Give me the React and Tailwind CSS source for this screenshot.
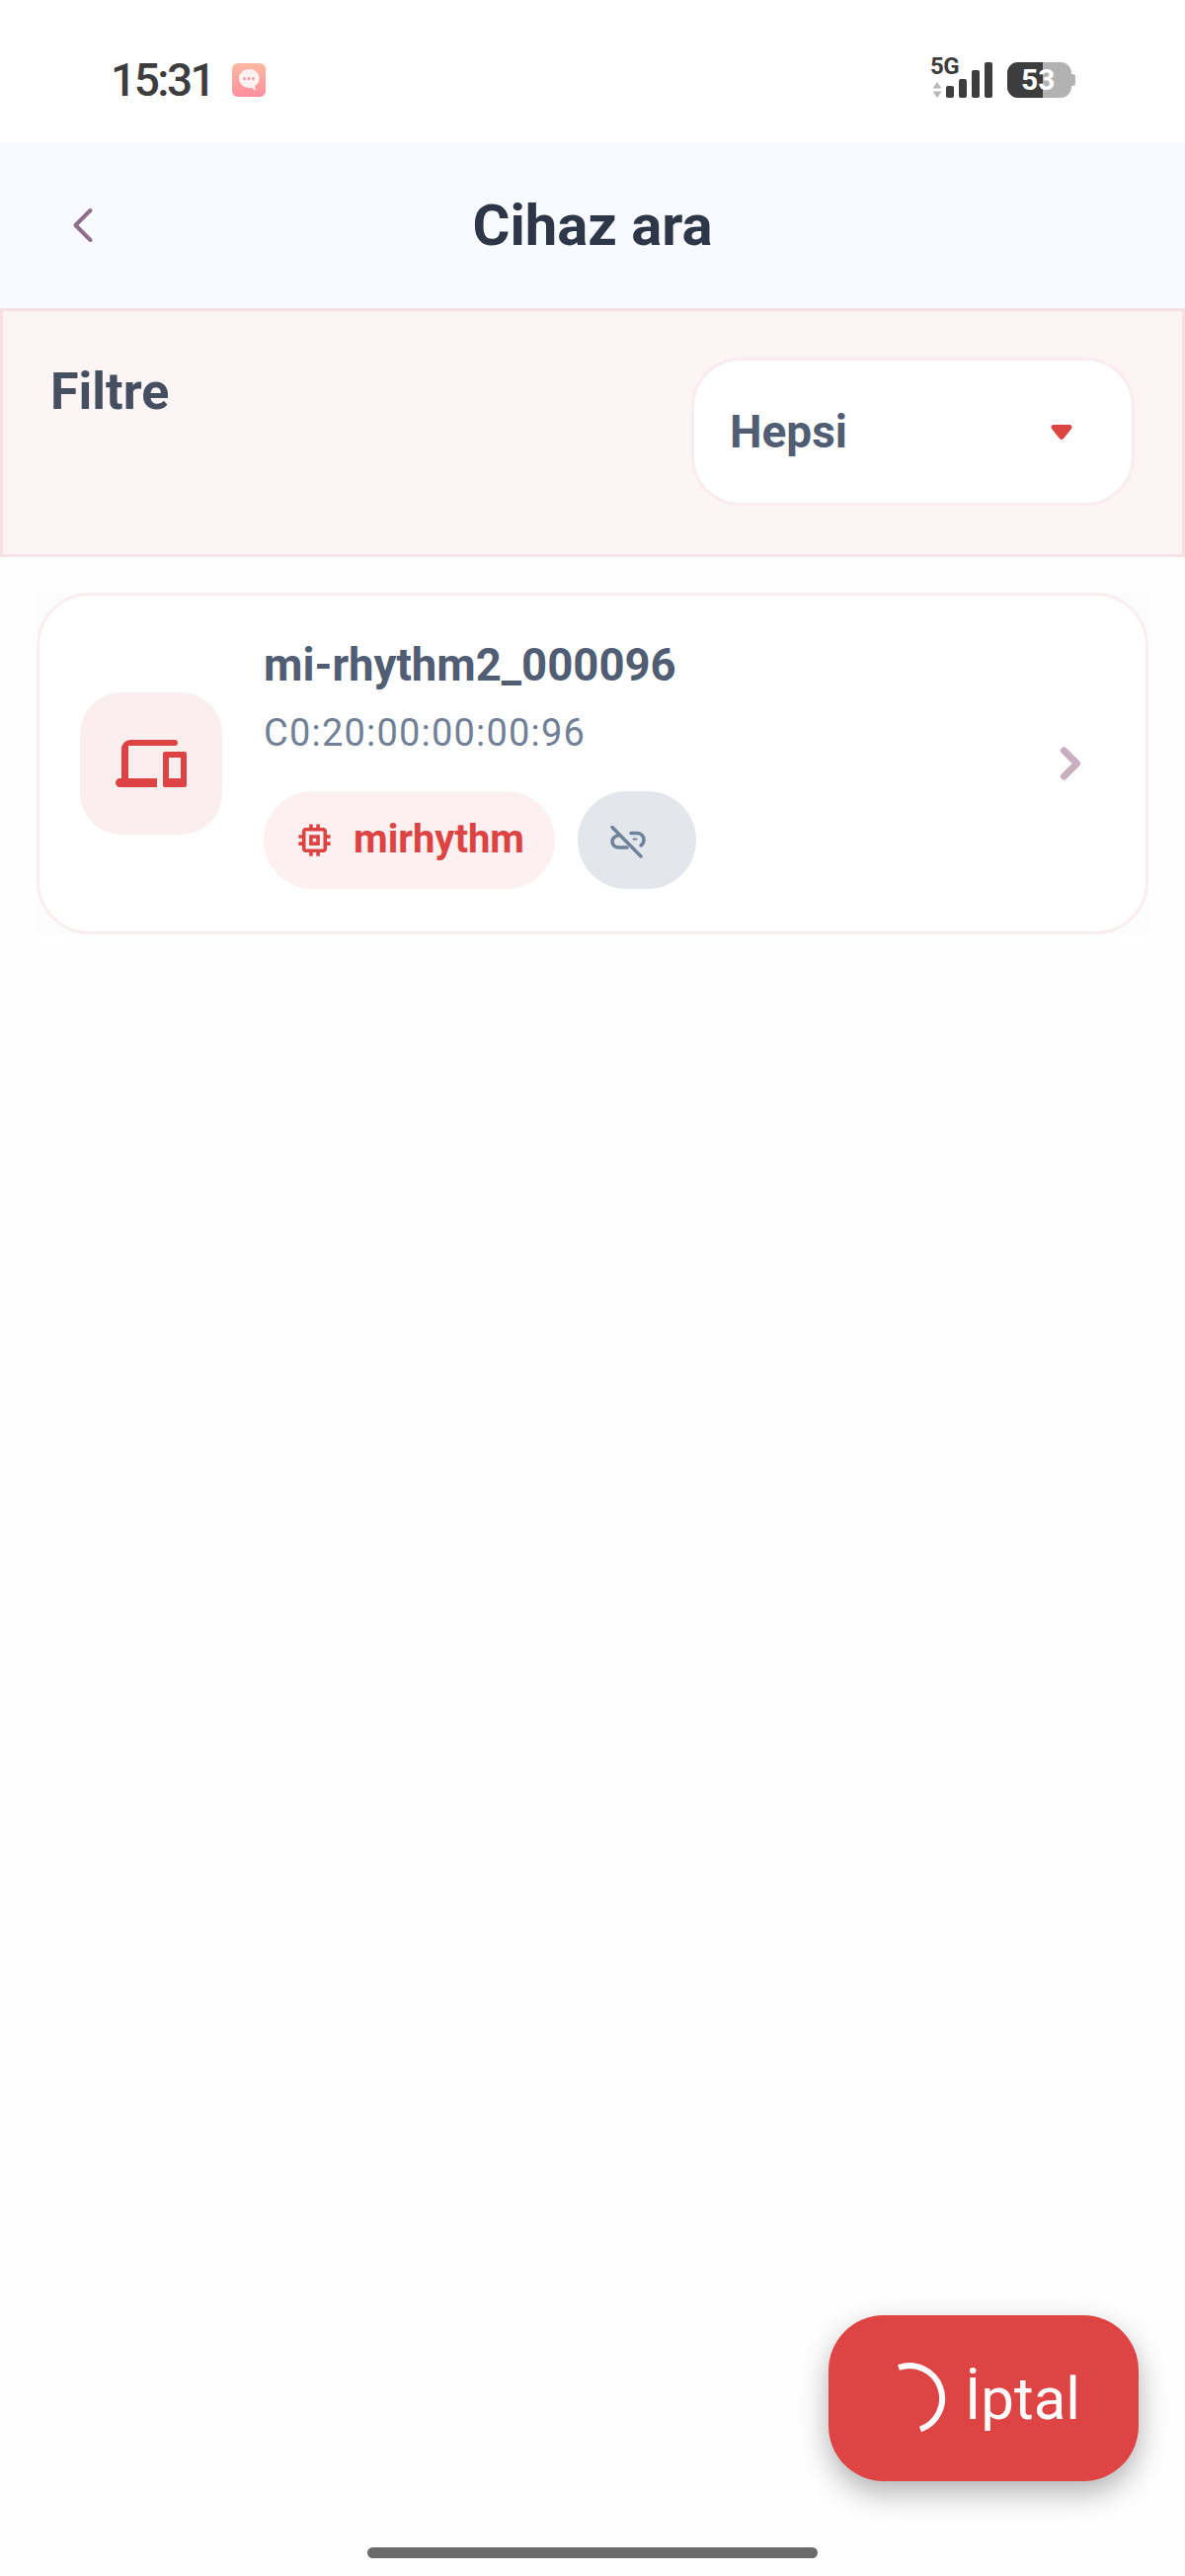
import { ChevronLeft, ChevronRight } from "lucide-react";

function MessageBadge() {
  return (
    <div className="w-[34px] h-[34px] rounded-[6px] bg-gradient-to-b from-[#ffb8a0] to-[#ff8f9f] flex items-center justify-center">
      <svg width="22" height="24" viewBox="0 0 22 24">
        <path d="M11 1a10 9.500 0 0 0 0 19h3l4 3-1-4.500A9.500 9.500 0 0 0 11 1z" fill="#fff" opacity="0.85" />
        <circle cx="6.500" cy="10.500" r="1.500" fill="#f29aa2" />
        <circle cx="11" cy="10.500" r="1.500" fill="#f29aa2" />
        <circle cx="15.500" cy="10.500" r="1.500" fill="#f29aa2" />
      </svg>
    </div>
  );
}

function SignalIcon() {
  return (
    <div className="flex items-end h-[40px]">
      <div className="flex flex-col items-start w-[28px] h-[40px] -mr-[12px]">
        <span className="text-[24px] leading-[16px] font-bold text-[#3d3d3d] tracking-[-0.5px]">5G</span>
        <svg width="10" height="16" viewBox="0 0 10 16" className="mt-[8px] ml-[2px]">
          <path d="M5 0l4.500 6.500H.5zM5 16l4.500-6.500H.5z" fill="#b8b8b8" />
        </svg>
      </div>
      <div className="flex items-end gap-[5px]">
        <div className="w-[8px] h-[12px] rounded-[2px] bg-[#3d3d3d]" />
        <div className="w-[8px] h-[19px] rounded-[2px] bg-[#3d3d3d]" />
        <div className="w-[8px] h-[28px] rounded-[2px] bg-[#3d3d3d]" />
        <div className="w-[8px] h-[36px] rounded-[2px] bg-[#3d3d3d]" />
      </div>
    </div>
  );
}

function BatteryIcon() {
  return (
    <div className="relative flex items-center">
      <div className="relative w-[65px] h-[36px] rounded-[11px] bg-[#b2b2b2] overflow-hidden">
        <div className="w-[36px] h-full bg-[#3d3d3d]" />
      </div>
      <div className="w-[4px] h-[12px] rounded-r-[3px] bg-[#b2b2b2]" />
      <span className="absolute left-[14px] top-[3px] text-[30px] leading-[30px] font-bold text-white">53</span>
    </div>
  );
}

function DevicesIcon() {
  return (
    <svg width="72" height="48" viewBox="0 0 72 48" fill="#dd4343">
      <path d="M15 0h45a3 3 0 0 1 0 6H13v33h29v9H4.500a4.500 4.500 0 0 1 0-9H6V9a9 9 0 0 1 9-9z" />
      <path fillRule="evenodd" d="M50 12h20a2 2 0 0 1 2 2v32a2 2 0 0 1-2 2H50a2 2 0 0 1-2-2V14a2 2 0 0 1 2-2zm4 6v21h12V18z" />
    </svg>
  );
}

function ChipIcon() {
  return (
    <svg width="43" height="43" viewBox="0 0 24 24" fill="#dd4343">
      <path d="M15 9H9v6h6V9zm-2 4h-2v-2h2v2zm8-2V9h-2V7c0-1.100-.9-2-2-2h-2V3h-2v2h-2V3H9v2H7c-1.100 0-2 .9-2 2v2H3v2h2v2H3v2h2v2c0 1.100.9 2 2 2h2v2h2v-2h2v2h2v-2h2c1.100 0 2-.9 2-2v-2h2v-2h-2v-2h2zm-4 6H7V7h10v10z" />
    </svg>
  );
}

function LinkOffIcon() {
  return (
    <svg width="60" height="52" viewBox="0 0 60 52" fill="none" stroke="#6f819b" strokeWidth="3.500" strokeLinecap="round">
      <path d="M15 12.500L44 42" />
      <path d="M22 20.500C17.500 21.500 15 24 15 27c0 3.500 3 6 7 6h8" />
      <path d="M34 18.500h6c4 0 7 3 7 6.500 0 2.500-1 4.500-3 6" />
      <path d="M36.500 24.500h3" strokeWidth="2" />
    </svg>
  );
}

export default function App() {
  return (
    <div className="relative w-[1200px] h-[2608px] flex flex-col bg-[#fefefe] font-['Roboto',sans-serif] overflow-hidden">
      {/* Status bar */}
      <div className="h-[144px] bg-white flex items-start justify-between pl-[112px] pr-[111px] pt-[59px]">
        <div className="flex items-center gap-[19px] h-[44px]">
          <span className="text-[46px] leading-[44px] font-medium text-[#3d3d3d] tracking-[-2.500px]">15:31</span>
          <MessageBadge />
        </div>
        <div className="flex items-end gap-[15px] h-[40px]">
          <SignalIcon />
          <BatteryIcon />
        </div>
      </div>

      {/* Header */}
      <div className="relative h-[168px] bg-[#f9faff] flex items-center justify-center">
        <ChevronLeft className="absolute left-[54px] top-[54px] text-[#8e6f8c]" size={60} strokeWidth={1.6} />
        <h1 className="text-[58px] font-bold text-[#2d3748] leading-none">Cihaz ara</h1>
      </div>

      {/* Filter */}
      <div className="h-[252px] bg-[#fdf4f5] border-[3px] border-[#f6e2e4] flex justify-between pl-[48px] pr-[48px] pt-[47px]">
        <span className="text-[52px] leading-[59px] mt-[5px] font-bold text-[#454f60]">Filtre</span>
        <div className="w-[449px] h-[150px] bg-white border-[3px] border-[#f9ecee] rounded-[50px] flex items-center justify-between pl-[36px] pr-[60px]">
          <span className="text-[46px] font-bold text-[#505d73] leading-none">Hepsi</span>
          <svg width="22" height="15" viewBox="0 0 22 15">
            <path d="M3 0h16a2.500 2.500 0 0 1 2 4l-8 10a2.500 2.500 0 0 1-4 0L1 4a2.500 2.500 0 0 1 2-4z" fill="#dd4343" />
          </svg>
        </div>
      </div>

      {/* Device card */}
      <div className="px-[37px] pt-[36px]">
        <div className="bg-[#fcfcfc]">
          <div className="h-[346px] bg-white border-[3px] border-[#f9eeee] rounded-[54px] flex items-center pl-[41px] pr-[50px]">
            <div className="w-[144px] h-[144px] rounded-[42px] bg-[#fbeeee] flex items-center justify-center shrink-0">
              <DevicesIcon />
            </div>
            <div className="ml-[42px] flex-1">
              <div className="text-[45.500px] leading-[54px] font-bold text-[#505d73]">mi-rhythm2_000096</div>
              <div className="text-[38px] leading-[46px] mt-[18px] text-[#718096] tracking-[1.200px]">C0:20:00:00:00:96</div>
              <div className="flex gap-[23px] mt-[36px]">
                <div className="h-[99px] w-[295px] rounded-full bg-[#fcf0f0] flex items-center pl-[30px] gap-[18px]">
                  <ChipIcon />
                  <span className="text-[40px] font-bold text-[#dd4343] leading-none">mirhythm</span>
                </div>
                <div className="h-[99px] w-[120px] rounded-full bg-[#e3e7ec] pl-[20px] pt-[24px]">
                  <LinkOffIcon />
                </div>
              </div>
            </div>
            <ChevronRight className="text-[#c8aebf]" size={52} strokeWidth={3.2} />
          </div>
        </div>
      </div>

      {/* Cancel button */}
      <button className="absolute left-[839px] top-[2344px] w-[314px] h-[168px] rounded-[56px] bg-[#de4444] shadow-[0_12px_30px_rgba(0,0,0,0.3)] flex items-center pl-[66px] text-white">
        <svg width="56" height="72" viewBox="0 0 56 72" fill="none" stroke="#fff" strokeWidth="6">
          <path d="M5 5A33 33 0 0 1 27 67.500" />
        </svg>
        <span className="text-[60px] ml-[16px] pt-[2px] font-normal leading-none">İptal</span>
      </button>

      {/* Home indicator */}
      <div className="absolute left-[372px] top-[2579px] w-[456px] h-[11px] rounded-full bg-[#6b6b6b]" />
    </div>
  );
}
